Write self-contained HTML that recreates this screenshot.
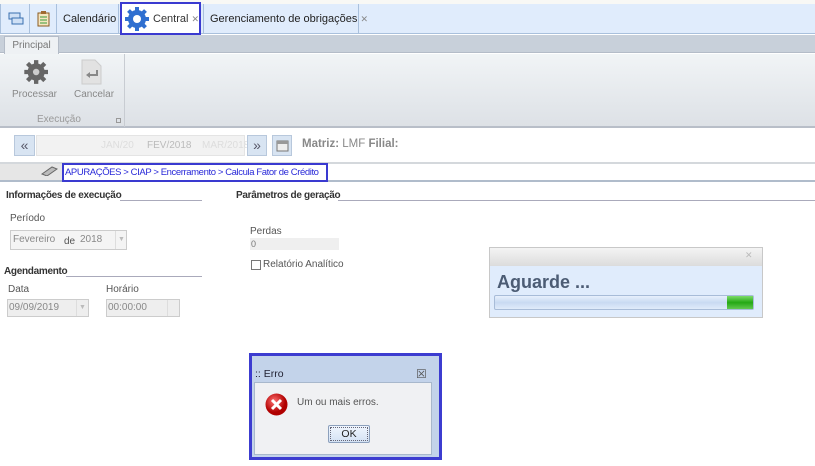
<!DOCTYPE html>
<html><head><meta charset="utf-8"><style>
*{margin:0;padding:0;box-sizing:border-box}
body{width:815px;height:466px;overflow:hidden;background:#fff;font-family:"Liberation Sans",sans-serif;font-size:11px;color:#333;position:relative}
.a{position:absolute;white-space:nowrap}
.tab{position:absolute;top:4px;height:30px;border-right:1px solid #a9c0dc;font-size:11px;color:#222;line-height:30px;white-space:nowrap}
.lbl{color:#555;font-size:10px}
.hdr{font-weight:bold;font-size:10px;color:#333;letter-spacing:-0.3px}
</style></head><body>
<div class="a" style="left:0;top:0;width:815px;height:4px;background:#f8f8f5"></div>
<div class="a" style="left:0;top:4px;width:815px;height:30px;background:#e0ecfc;border-bottom:1px solid #a9c0dc"></div>
<div class="tab" style="left:0;width:30px;border-left:1px solid #a9c0dc"><svg class="a" style="left:7px;top:8px" width="16" height="14"><rect x="1" y="1" width="11" height="6" fill="#cfe0f5" stroke="#3a6fb0"/><rect x="4" y="6" width="11" height="6" fill="#cfe0f5" stroke="#3a6fb0"/></svg></div>
<div class="tab" style="left:30px;width:27px"><svg class="a" style="left:7px;top:7px" width="13" height="16"><rect x="1" y="2" width="11" height="13" fill="#f5e6c0" stroke="#8a5a20"/><rect x="4" y="0" width="5" height="3" fill="#a06a30"/><path d="M3 6h7M3 9h7M3 12h7" stroke="#3a9a3a"/></svg></div>
<div class="tab" style="left:57px;width:62px;padding-left:6px">Calendário</div>
<div class="a" style="left:120px;top:2px;width:81px;height:33px;border:2px solid #3a3ad0;background:#fff"></div>
<svg class="a" style="left:124px;top:6px" width="26" height="26" viewBox="0 0 26 26"><g fill="#2f6fd0"><circle cx="13" cy="13" r="9"/><g stroke="#2f6fd0" stroke-width="4"><path d="M13 1v24M1 13h24M4.5 4.5l17 17M21.5 4.5l-17 17"/></g></g><circle cx="13" cy="13" r="4" fill="#fff"/></svg>
<div class="a" style="left:153px;top:4px;line-height:30px;font-size:11px">Central <span style="color:#888;font-size:9px">✕</span></div>
<div class="tab" style="left:203px;width:156px;padding-left:6px;border-left:1px solid #a9c0dc">Gerenciamento de obrigações <span style="color:#888;font-size:9px">✕</span></div>
<div class="a" style="left:0;top:35px;width:815px;height:18px;background:#c8d0da;border-bottom:1px solid #b4bcc8"></div>
<div class="a" style="left:4px;top:36px;width:55px;height:18px;background:#eef1f4;border:1px solid #b4bcc8;border-bottom:none;color:#777;font-size:10px;text-align:center;line-height:18px">Principal</div>
<div class="a" style="left:0;top:54px;width:815px;height:74px;background:linear-gradient(#f1f4f6,#dde1e6);border-bottom:2px solid #b8bec8"></div>
<div class="a" style="left:124px;top:54px;width:1px;height:73px;background:#c8ccd2"></div>
<svg class="a" style="left:20px;top:58px" width="28" height="28" viewBox="0 0 26 26"><g fill="#666"><circle cx="15" cy="13" r="8"/><g stroke="#666" stroke-width="4"><path d="M15 2v22M4 13h22M7 5l16 16M23 5l-16 16"/></g></g><circle cx="15" cy="13" r="3" fill="#ccc"/></svg>
<svg class="a" style="left:80px;top:59px" width="22" height="26"><path d="M2 1h13l6 6v18H2z" fill="#e2e2e2" stroke="#ccc"/><path d="M6 16l4-3v2h6v-4h2v6h-8v2z" fill="#888"/></svg>
<div class="a lbl" style="left:12px;top:89px;color:#888">Processar</div>
<div class="a lbl" style="left:74px;top:89px;color:#888">Cancelar</div>
<div class="a lbl" style="left:37px;top:114px;color:#999">Execução</div>
<div class="a" style="left:116px;top:118px;width:5px;height:5px;border:1px solid #999"></div>
<div class="a" style="left:14px;top:135px;width:21px;height:21px;background:#d8e4f2;border:1px solid #b8c8dc;text-align:center;line-height:19px;color:#556;font-size:14px">«</div>
<div class="a" style="left:36px;top:135px;width:209px;height:21px;background:#f2f2f2;border:1px solid #e4e4e4;color:#bbb;font-size:10px;line-height:20px"><span style="position:absolute;left:110px">FEV/2018</span><span style="position:absolute;left:64px;color:#ddd">JAN/20</span><span style="position:absolute;left:165px;color:#ddd">MAR/2018</span></div>
<div class="a" style="left:247px;top:135px;width:20px;height:21px;background:#d8e4f2;border:1px solid #b8c8dc;text-align:center;line-height:19px;color:#556;font-size:14px">»</div>
<div class="a" style="left:272px;top:135px;width:20px;height:21px;background:#d8e4f2;border:1px solid #b8c8dc"><svg style="margin:3px" width="13" height="13"><rect x="1" y="2" width="11" height="10" fill="#eee" stroke="#777"/><rect x="1" y="2" width="11" height="3" fill="#999"/></svg></div>
<div class="a" style="left:302px;top:138px;font-size:11.5px;color:#888"><b>Matriz:</b> LMF <b>Filial:</b></div>
<div class="a" style="left:0;top:162px;width:815px;height:20px;background:#fff;border-top:2px solid #d4d8dc;border-bottom:2px solid #b0bccb"></div>
<div class="a" style="left:0;top:164px;width:62px;height:16px;background:#e6e6e6"></div>
<svg class="a" style="left:40px;top:166px" width="18" height="10"><path d="M2 8l10-7 5 2-10 7z" fill="#bbb" stroke="#666"/></svg>
<div class="a" style="left:62px;top:163px;width:266px;height:19px;border:2px solid #3a3ad0;color:#2a2ad8;font-size:9.5px;line-height:15px;padding-left:1px;letter-spacing:-0.4px;overflow:hidden">APURAÇÕES &gt; CIAP &gt; Encerramento &gt; Calcula Fator de Crédito</div>
<div class="a hdr" style="left:6px;top:190px">Informações de execução</div>
<div class="a" style="left:120px;top:200px;width:82px;height:1px;background:#aab"></div>
<div class="a lbl" style="left:10px;top:213px">Período</div>
<div class="a" style="left:10px;top:230px;width:117px;height:20px;border:1px solid #ccc;background:#f4f4f4;color:#888;font-size:10px;line-height:18px"><span style="padding-left:2px">Fevereiro</span><span style="position:absolute;left:53px;top:2px;color:#555">de</span><span style="position:absolute;left:69px">2018</span><span style="position:absolute;left:104px;top:0;width:12px;height:18px;border-left:1px solid #ddd;color:#bbb;font-size:7px;text-align:center">▼</span></div>
<div class="a hdr" style="left:4px;top:266px">Agendamento</div>
<div class="a" style="left:66px;top:276px;width:136px;height:1px;background:#aab"></div>
<div class="a lbl" style="left:8px;top:284px">Data</div>
<div class="a lbl" style="left:106px;top:284px">Horário</div>
<div class="a" style="left:7px;top:299px;width:82px;height:18px;border:1px solid #ccc;background:#eee;color:#888;font-size:10px;line-height:16px;padding-left:1px">09/09/2019<span style="position:absolute;right:0;top:0;width:12px;height:16px;border-left:1px solid #ddd;color:#bbb;font-size:7px;text-align:center">▼</span></div>
<div class="a" style="left:106px;top:299px;width:74px;height:18px;border:1px solid #ccc;background:#eee;color:#888;font-size:10px;line-height:16px;padding-left:1px">00:00:00<span style="position:absolute;right:0;top:0;width:12px;height:16px;border-left:1px solid #ddd"></span></div>
<div class="a hdr" style="left:236px;top:190px">Parâmetros de geração</div>
<div class="a" style="left:338px;top:200px;width:477px;height:1px;background:#aab"></div>
<div class="a lbl" style="left:250px;top:226px">Perdas</div>
<div class="a" style="left:250px;top:238px;width:89px;height:12px;background:#efefef;color:#777;font-size:9px;line-height:12px;padding-left:1px">0</div>
<div class="a" style="left:251px;top:260px;width:10px;height:10px;border:1px solid #777"></div>
<div class="a lbl" style="left:263px;top:259px">Relatório Analítico</div>
<div class="a" style="left:489px;top:247px;width:274px;height:71px;border:1px solid #c8c8c8;background:#e0ecfc"></div>
<div class="a" style="left:490px;top:248px;width:272px;height:18px;background:linear-gradient(#f4f4f4,#dcdcdc)"></div>
<div class="a" style="left:745px;top:250px;color:#bbb;font-size:9px">✕</div>
<div class="a" style="left:497px;top:272px;font-size:18px;font-weight:bold;color:#4c5c74">Aguarde ...</div>
<div class="a" style="left:494px;top:295px;width:260px;height:15px;border:1px solid #a8bcd8;border-radius:2px;background:linear-gradient(#e8f0fc,#c8daf2 50%,#e0ebfa)"></div>
<div class="a" style="left:727px;top:296px;width:26px;height:13px;background:linear-gradient(#7edc6a,#24a814 50%,#62c850)"></div>
<div class="a" style="left:249px;top:353px;width:193px;height:107px;border:3px solid #3c3cd0;background:#c3d3ea"></div>
<div class="a" style="left:255px;top:368px;font-size:10.5px;color:#223">:: Erro</div>
<div class="a" style="left:416px;top:367px;color:#555;font-size:12px">☒</div>
<div class="a" style="left:254px;top:382px;width:178px;height:73px;background:#f0f1f3;border:1px solid #a8b8cc"></div>
<svg class="a" style="left:265px;top:393px" width="23" height="23"><defs><radialGradient id="g" cx="40%" cy="35%"><stop offset="0" stop-color="#ff7070"/><stop offset="1" stop-color="#b00000"/></radialGradient></defs><circle cx="11.5" cy="11.5" r="11" fill="url(#g)"/><path d="M7 7l9 9M16 7l-9 9" stroke="#fff" stroke-width="3"/></svg>
<div class="a" style="left:297px;top:397px;font-size:10px;color:#555">Um ou mais erros.</div>
<div class="a" style="left:328px;top:425px;width:42px;height:18px;border:1px solid #8ca0bc;border-radius:2px;background:linear-gradient(#f0f6fe,#d4e2f4);text-align:center;line-height:16px;font-size:10.5px;color:#222;outline:1px dotted #667;outline-offset:-3px">OK</div>
</body></html>
